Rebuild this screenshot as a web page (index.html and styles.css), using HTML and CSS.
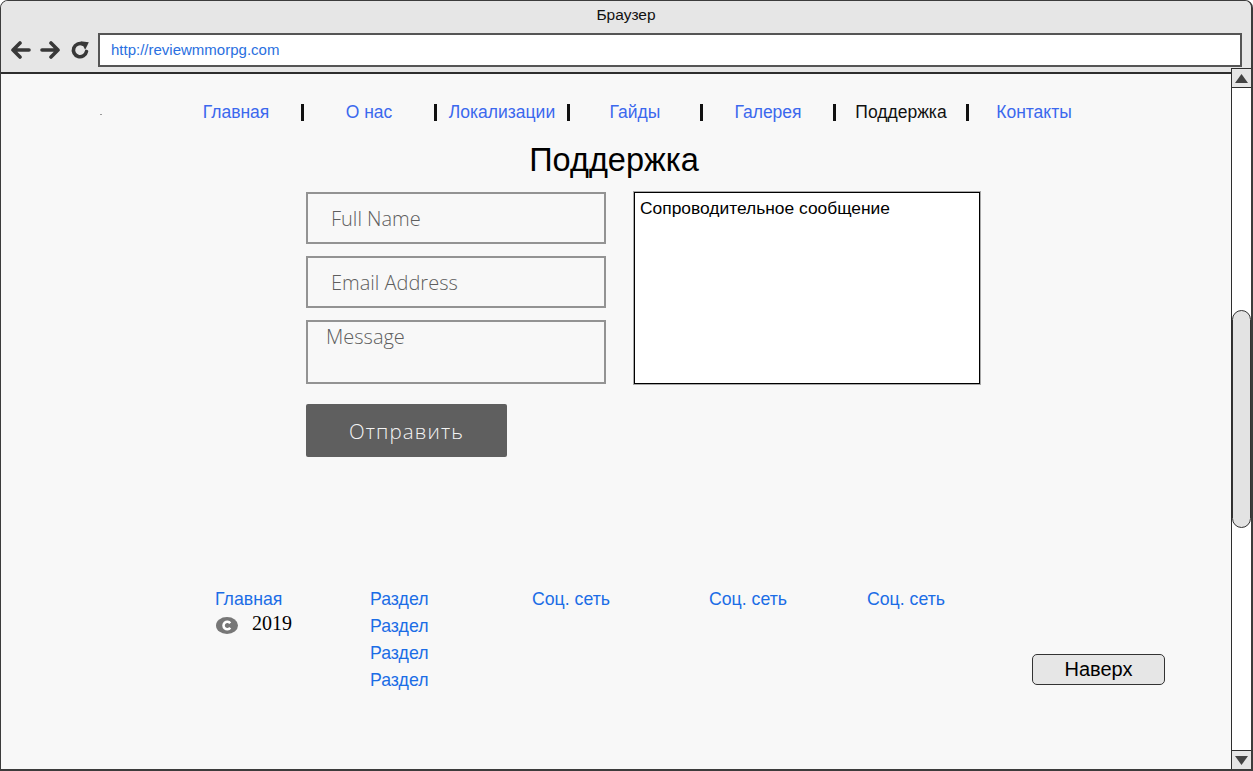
FILE: index.html
```html
<!DOCTYPE html>
<html lang="ru">
<head>
<meta charset="utf-8">
<title>Поддержка</title>
<link rel="stylesheet" href="styles.css">
</head>
<body>
<div class="window">
  <header class="titlebar">
    <div class="title">Браузер</div>
    <div class="toolbar">
      <svg class="icon icon-back" width="21" height="18" viewBox="0 0 21 18" aria-hidden="true"><path d="M19 9H3M10 2L3 9l7 7"/></svg>
      <svg class="icon icon-fwd" width="21" height="18" viewBox="0 0 21 18" aria-hidden="true"><path d="M2 9h16M11 2l7 7-7 7"/></svg>
      <svg class="icon icon-reload" width="20" height="20" viewBox="0 0 20 20" aria-hidden="true"><path d="M16.5 11.5A6.6 6.6 0 1 1 12.8 4.2"/><polygon class="solid" points="10.5,1.2 18.8,2.2 15.2,9.8"/></svg>
      <div class="address">http://reviewmmorpg.com</div>
    </div>
  </header>
  <div class="viewport">
    <main class="page">
      <nav class="nav">
        <span class="speck"></span>
        <a class="nav-item" href="#">Главная</a><span class="sep"></span>
        <a class="nav-item" href="#">О нас</a><span class="sep"></span>
        <a class="nav-item" href="#">Локализации</a><span class="sep"></span>
        <a class="nav-item" href="#">Гайды</a><span class="sep"></span>
        <a class="nav-item" href="#">Галерея</a><span class="sep"></span>
        <a class="nav-item nav-current" href="#">Поддержка</a><span class="sep"></span>
        <a class="nav-item" href="#">Контакты</a>
      </nav>
      <h1 class="heading">Поддержка</h1>
      <section class="support">
        <form class="form">
          <input class="field" type="text" placeholder="Full Name">
          <input class="field" type="email" placeholder="Email Address">
          <textarea class="field field-message" placeholder="Message"></textarea>
          <button class="submit" type="button">Отправить</button>
        </form>
        <div class="note">Сопроводительное сообщение</div>
      </section>
      <footer class="footer">
        <div class="fcol">
          <a class="flink" href="#">Главная</a>
          <div class="copy">
            <svg class="copy-icon" width="22" height="17" viewBox="0 0 22 17" aria-hidden="true"><ellipse cx="11" cy="8.5" rx="11" ry="8.5"/><path d="M14.2 6.3A3.7 3.7 0 1 0 14.2 10.7"/></svg>
            <span class="year">2019</span>
          </div>
        </div>
        <div class="fcol">
          <a class="flink" href="#">Раздел</a>
          <a class="flink" href="#">Раздел</a>
          <a class="flink" href="#">Раздел</a>
          <a class="flink" href="#">Раздел</a>
        </div>
        <div class="fcol"><a class="flink" href="#">Соц. сеть</a></div>
        <div class="fcol"><a class="flink" href="#">Соц. сеть</a></div>
        <div class="fcol"><a class="flink" href="#">Соц. сеть</a></div>
        <button class="top-btn" type="button">Наверх</button>
      </footer>
    </main>
    <div class="scrollbar">
      <div class="sb-btn"><svg width="13" height="9" viewBox="0 0 13 9" aria-hidden="true"><polygon points="6.5,0 13,9 0,9"/></svg></div>
      <div class="sb-thumb"></div>
      <div class="sb-btn sb-down"><svg width="13" height="9" viewBox="0 0 13 9" aria-hidden="true"><polygon points="0,0 13,0 6.5,9"/></svg></div>
    </div>
  </div>
</div>
</body>
</html>
```

FILE: styles.css
```css
* { box-sizing: border-box; }
html, body { margin: 0; padding: 0; background: #ffffff; }
body { font-family: "Liberation Sans", Arial, sans-serif; color: #000; }

.window {
  width: 1253px;
  height: 771px;
  border: 1px solid #3c3c3c;
  border-right-width: 2px;
  border-bottom-width: 2px;
  border-radius: 8px 8px 0 0;
  display: flex;
  flex-direction: column;
  overflow: hidden;
  background: #f8f8f8;
}

/* ---------- title bar ---------- */
.titlebar {
  background: #e6e6e6;
  border-bottom: 2px solid #2e2e2e;
  padding-bottom: 5px;
  flex: none;
}
.title {
  height: 28px;
  line-height: 28px;
  text-align: center;
  font-size: 15.5px;
  color: #111;
}
.toolbar {
  margin-top: 4px;
  display: flex;
  align-items: center;
  padding-left: 9px;
  padding-right: 9px;
}
.icon path { fill: none; stroke: #383838; stroke-width: 3.6; stroke-linecap: round; stroke-linejoin: round; }
.icon .solid { fill: #383838; stroke: none; }
.icon-fwd { margin-left: 9px; }
.icon-reload { margin-left: 9px; }
.address {
  margin-left: 8px;
  flex: 1;
  height: 34px;
  border: 2px solid #555;
  background: #fff;
  font-size: 15px;
  line-height: 30px;
  padding-left: 11px;
  color: #2a6fe0;
}

/* ---------- viewport ---------- */
.viewport {
  flex: 1;
  display: flex;
  min-height: 0;
}
.page {
  flex: 1;
  min-width: 0;
  background: #f8f8f8;
}

/* nav */
.nav {
  margin-top: 26px;
  height: 24px;
  display: flex;
  align-items: center;
  padding-left: 99px;
}
.speck {
  width: 2px;
  height: 1px;
  background: #9a9a9a;
  align-self: flex-start;
  margin-top: 14px;
  margin-right: 69px;
}
.nav-item {
  width: 130px;
  text-align: center;
  font-size: 17.5px;
  line-height: 24px;
  color: #3b68ee;
  text-decoration: none;
}
.nav-current { color: #111; }
.sep {
  width: 3px;
  height: 17px;
  background: #111;
}

.heading {
  margin: 17px 0 0;
  font-size: 32.5px;
  font-weight: normal;
  line-height: 38px;
  text-align: center;
  color: #000;
  padding-right: 4px;
}

/* support form */
.support {
  margin-top: 13px;
  display: flex;
  align-items: flex-start;
  padding-left: 305px;
  gap: 28px;
}
.form {
  width: 300px;
  display: flex;
  flex-direction: column;
  margin: 0;
}
.field {
  width: 300px;
  height: 52px;
  margin: 0 0 12px;
  border: 2px solid #939393;
  background: #f8f8f8;
  font-family: "Open Sans", sans-serif;
  font-weight: 300;
  font-size: 20px;
  color: #555;
  padding: 0 0 0 23px;
  outline: none;
}
.field::placeholder { color: #5e5e5e; opacity: 1; }
.field-message {
  height: 64px;
  resize: none;
  padding: 3px 0 0 18px;
  line-height: 24px;
  overflow: hidden;
}
.submit {
  margin-top: 8px;
  width: 201px;
  height: 53px;
  border: none;
  border-radius: 2px;
  background: #5f5f5f;
  color: #f4f4f4;
  font-family: "Open Sans", sans-serif;
  font-weight: 300;
  font-size: 20.5px;
  letter-spacing: 1.1px;
  padding: 0;
}
.note {
  width: 346px;
  height: 192px;
  background: #fff;
  border: 1px solid #000;
  box-shadow: 0 0 0 1px #a8a8a8;
  font-size: 17.4px;
  line-height: 19px;
  padding: 6px 0 0 5px;
  color: #000;
}

/* footer */
.footer {
  margin-top: 129px;
  display: grid;
  grid-template-columns: 155px 162px 177px 158px 165px 133px;
  padding-left: 214px;
  align-items: start;
}
.fcol {
  display: flex;
  flex-direction: column;
  align-items: flex-start;
}
.flink {
  font-size: 17.7px;
  line-height: 27px;
  color: #1b6de6;
  text-decoration: none;
}
.copy {
  display: flex;
  align-items: flex-start;
  height: 20px;
}
.copy-icon { margin-top: 4px; margin-left: 1px; }
.copy-icon ellipse { fill: #777; }
.copy-icon path { fill: none; stroke: #fff; stroke-width: 2.6; }
.year {
  margin-left: 14px;
  font-family: "Liberation Serif", "Times New Roman", serif;
  font-size: 20px;
  line-height: 20px;
  color: #000;
}
.top-btn {
  margin-top: 68px;
  width: 133px;
  height: 31px;
  border: 1px solid #333;
  border-radius: 5px;
  background: #e6e6e6;
  font-family: "Liberation Sans", Arial, sans-serif;
  font-size: 20px;
  color: #000;
  padding: 0;
}

/* scrollbar */
.scrollbar {
  position: relative;
  z-index: 1;
  width: 20px;
  margin-top: -6px;
  background: #fff;
  border-left: 1px solid #2e2e2e;
  display: flex;
  flex-direction: column;
}
.sb-btn {
  height: 20px;
  background: #e6e6e6;
  border-top: 1px solid #2e2e2e;
  border-bottom: 1px solid #2e2e2e;
  display: flex;
  align-items: center;
  justify-content: center;
}
.sb-btn polygon { fill: #444; }
.sb-down { margin-top: auto; height: 19px; border-bottom: none; }
.sb-thumb {
  margin-top: 222px;
  height: 218px;
  background: #e3e3e3;
  border: 1px solid #333;
  border-radius: 10px;
}
```
